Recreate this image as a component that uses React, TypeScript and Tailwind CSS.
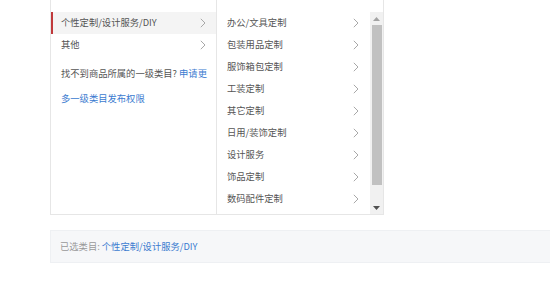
import React from "react";

const FONT = { fontFamily: '"Noto Sans CJK SC", "Noto Sans", sans-serif' };

const leftItems = [
  { name: "个性定制/设计服务/DIY", active: true },
  { name: "其他", active: false },
];

const rightItems = [
  "办公/文具定制",
  "包装用品定制",
  "服饰箱包定制",
  "工装定制",
  "其它定制",
  "日用/装饰定制",
  "设计服务",
  "饰品定制",
  "数码配件定制",
];

function Chevron() {
  return (
    <svg width="6" height="10" viewBox="0 0 6 10" className="shrink-0">
      <polyline points="0.8,0.8 5,5 0.8,9.2" fill="none" stroke="#a8a8a8" strokeWidth="1" />
    </svg>
  );
}

function Scrollbar() {
  return (
    <div className="flex h-full w-[13px] shrink-0 flex-col items-center bg-[#f1f1f1]">
      <div className="flex h-[13px] w-full items-center justify-center">
        <svg width="7" height="4" viewBox="0 0 7 4">
          <polygon points="3.5,0 7,4 0,4" fill="#a3a3a3" />
        </svg>
      </div>
      <div className="h-[160px] w-[10px] bg-[#c1c1c1]" />
      <div className="flex-1" />
      <div className="flex h-[13px] w-full items-center justify-center">
        <svg width="7" height="4" viewBox="0 0 7 4">
          <polygon points="0,0 7,0 3.5,4" fill="#505050" />
        </svg>
      </div>
    </div>
  );
}

export default function App() {
  return (
    <div className="h-[293px] w-[550px] overflow-hidden bg-white text-[9.3px] text-[#555]" style={FONT}>
      <div className="ml-[50px] flex h-[215px] w-[334px] border-x border-b border-[#e6e6e6]">
        {/* 一级类目 */}
        <div className="w-[166px] shrink-0 border-r border-[#e6e6e6] pt-[12px]">
          {leftItems.map((item) => (
            <div
              key={item.name}
              className={
                item.active
                  ? "flex h-[22px] items-center justify-between border-l-2 border-[#c0393b] bg-[#f4f4f4] pl-[8px] pr-[10px]"
                  : "flex h-[22px] items-center justify-between border-l-2 border-transparent pl-[8px] pr-[10px]"
              }
            >
              <span>{item.name}</span>
              <Chevron />
            </div>
          ))}
          <div className="mt-[5px] pl-[10px] leading-[25px]">
            <p className="whitespace-nowrap">
              找不到商品所属的一级类目? <span className="text-[#3b7bd0]">申请更</span>
            </p>
            <p className="text-[#3b7bd0]">多一级类目发布权限</p>
          </div>
        </div>

        {/* 二级类目 */}
        <div className="flex flex-1 pt-[12px]">
          <div className="flex-1">
            {rightItems.map((name) => (
              <div key={name} className="flex h-[22px] items-center justify-between pl-[10px] pr-[11px]">
                <span>{name}</span>
                <Chevron />
              </div>
            ))}
          </div>
          <Scrollbar />
        </div>
      </div>

      <div className="ml-[50px] mt-[15px] flex h-[33px] items-center border border-r-0 border-[#eef0f3] bg-[#f6f7f9] pl-[9px]">
        <span className="text-[#999]">已选类目:</span>
        <span className="ml-[2px] text-[#3b7bd0]">个性定制/设计服务/DIY</span>
      </div>
    </div>
  );
}
